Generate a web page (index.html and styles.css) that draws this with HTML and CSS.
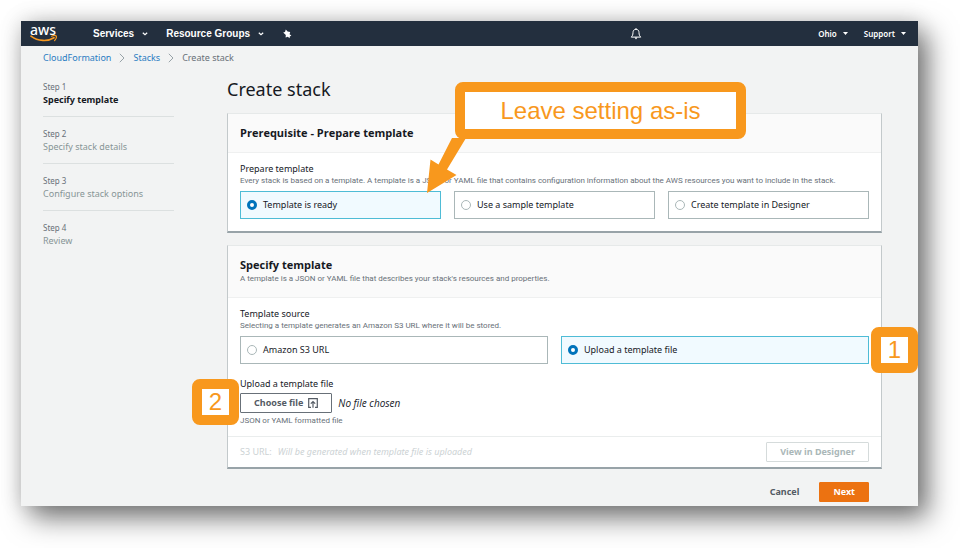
FILE: index.html
```html
<!DOCTYPE html>
<html lang="en">
<head>
<meta charset="utf-8">
<title>Create stack</title>
<link rel="stylesheet" href="styles.css">
</head>
<body>
<div class="window">
  <header class="topbar">
    <a class="logo" href="#" aria-label="AWS">
      <span class="logo-text">aws</span>
      <svg class="logo-smile" viewBox="0 0 28 8" aria-hidden="true"><path d="M1 1.200C8 6.600 18 6.600 24 2.800" fill="none" stroke="#f7981f" stroke-width="1.700" stroke-linecap="round"/><path d="M21.600 1.200c2-.8 4-.8 4.600-.2.5.8-.2 3-1.600 4.600" fill="none" stroke="#f7981f" stroke-width="1.200" stroke-linecap="round"/></svg>
    </a>
    <nav class="menu">
      <button type="button" class="menu-item">Services <svg class="chevron" viewBox="0 0 6 4"><path d="M.8.8 3 2.800 5.200.8"/></svg></button>
      <button type="button" class="menu-item">Resource Groups <svg class="chevron" viewBox="0 0 6 4"><path d="M.8.8 3 2.800 5.200.8"/></svg></button>
      <button type="button" class="menu-item" aria-label="Pin"><svg class="pin" viewBox="0 0 10 10"><path d="M3.800.6 5.600 2.600 8.200 3 7.600 5.200 9.400 6.600 7.800 7.400 7.600 9.200 5.800 7.800 3.600 8.600 3.800 6 1.200 3.600 3 3Z"/></svg></button>
    </nav>
    <button type="button" class="menu-item bell-button" aria-label="Notifications"><svg class="bell" viewBox="0 0 12 12"><path d="M6 1.300c-2 0-3 1.400-3 3.200 0 2.300-.6 3.500-1.800 4.600h9.600C9.600 8 9 6.800 9 4.500 9 2.700 8 1.300 6 1.300Z" fill="none" stroke="#fff"/><path d="M4.600 9.600h2.800L6 11.400ZM5.400.3h1.200v1H5.400Z" fill="#fff"/></svg></button>
    <div class="account">
      <button type="button" class="menu-item small">Ohio <svg class="caret" viewBox="0 0 5 3"><path d="M0 0h5L2.500 3Z"/></svg></button>
      <button type="button" class="menu-item small">Support <svg class="caret" viewBox="0 0 5 3"><path d="M0 0h5L2.500 3Z"/></svg></button>
    </div>
  </header>

  <nav class="breadcrumb" aria-label="Breadcrumb">
    <a href="#">CloudFormation</a>
    <svg class="separator" viewBox="0 0 6 10"><path d="M.8.8 5 5 .8 9.200"/></svg>
    <a href="#">Stacks</a>
    <svg class="separator" viewBox="0 0 6 10"><path d="M.8.8 5 5 .8 9.200"/></svg>
    <span>Create stack</span>
  </nav>

  <div class="layout">
    <ol class="steps">
      <li class="current"><small>Step 1</small><span>Specify template</span></li>
      <li><small>Step 2</small><span>Specify stack details</span></li>
      <li><small>Step 3</small><span>Configure stack options</span></li>
      <li><small>Step 4</small><span>Review</span></li>
    </ol>

    <main class="content">
      <h1>Create stack</h1>

      <section class="panel">
        <div class="panel-header"><h2>Prerequisite - Prepare template</h2></div>
        <div class="panel-body">
          <h3>Prepare template</h3>
          <p class="hint">Every stack is based on a template. A template is a JSON or YAML file that contains configuration information about the AWS resources you want to include in the stack.</p>
          <div class="tiles">
            <label class="tile"><input type="radio" name="prepare" checked>Template is ready</label>
            <label class="tile"><input type="radio" name="prepare">Use a sample template</label>
            <label class="tile"><input type="radio" name="prepare">Create template in Designer</label>
          </div>
        </div>
        <svg class="arrow" viewBox="0 0 46 64" aria-hidden="true"><path d="M30 5 44 5 25 36.500 34.500 42 5 60 8.500 26.500 16.500 31.500Z"/></svg>
        <div class="callout">Leave setting as-is</div>
      </section>

      <section class="panel">
        <div class="panel-header">
          <h2>Specify template</h2>
          <p class="hint">A template is a JSON or YAML file that describes your stack's resources and properties.</p>
        </div>
        <div class="panel-body">
          <h3>Template source</h3>
          <p class="hint">Selecting a template generates an Amazon S3 URL where it will be stored.</p>
          <div class="tiles">
            <label class="tile"><input type="radio" name="source">Amazon S3 URL</label>
            <label class="tile"><input type="radio" name="source" checked>Upload a template file<span class="marker marker-right">1</span></label>
          </div>
          <div class="upload">
            <h3>Upload a template file</h3>
            <div class="file-row">
              <button type="button" class="button">Choose file <svg class="upload-icon" viewBox="0 0 10 10"><path d="M3 9.300H.7V.7h8.600v8.600H7M5 9.800V4M2.800 5.700 5 3.500l2.200 2.200"/></svg></button>
              <em>No file chosen</em>
            </div>
            <p class="hint">JSON or YAML formatted file</p>
            <span class="marker marker-left">2</span>
          </div>
        </div>
        <div class="panel-footer">
          <span>S3 URL:</span>
          <em>Will be generated when template file is uploaded</em>
          <button type="button" class="button" disabled>View in Designer</button>
        </div>
      </section>

      <div class="actions">
        <button type="button" class="button link">Cancel</button>
        <button type="button" class="button primary">Next</button>
      </div>
    </main>
  </div>
</div>
</body>
</html>
```

FILE: styles.css
```css
* {
  box-sizing: border-box;
}

body {
  margin: 0;
  padding: 21px 42px 42px 21px;
  background: #fff;
  color: #16191f;
  font: 9px/12px "Noto Sans", "Open Sans", sans-serif;
}

h1, h2, h3, p, ol {
  margin: 0;
  padding: 0;
}

button {
  font: inherit;
  cursor: pointer;
}

.window {
  background: #f2f3f3;
  box-shadow: 0 0 20px rgba(0, 0, 0, .16), 10px 12px 26px rgba(0, 0, 0, .52);
}

/* Top bar */
.topbar {
  display: flex;
  align-items: center;
  height: 25px;
  padding: 0 12px 0 9px;
  background: #232f3e;
  color: #fff;
}

.logo {
  display: flex;
  flex-direction: column;
  width: 28px;
  margin-right: 35px;
  color: #fff;
  text-decoration: none;
}

.logo-text {
  font-size: 14px;
  font-weight: 500;
  line-height: 11px;
}

.logo-smile {
  width: 28px;
  height: 8px;
}

.menu, .account {
  display: flex;
  align-items: center;
  gap: 18px;
}

.account {
  gap: 16px;
  margin-left: 176px;
}

.menu-item {
  display: flex;
  align-items: center;
  gap: 8px;
  padding: 0;
  border: 0;
  background: none;
  color: #fff;
  font-family: "Liberation Sans", sans-serif;
  font-size: 10px;
  font-weight: 700;
}

.menu-item.small {
  gap: 6px;
  font-family: "Noto Sans", sans-serif;
  font-size: 8px;
  font-weight: 600;
}

.chevron {
  width: 6px;
  height: 4px;
  fill: none;
  stroke: #fff;
  stroke-width: 1.2;
}

.caret {
  width: 5px;
  height: 3px;
  fill: #fff;
}

.pin {
  width: 10px;
  height: 10px;
  fill: #fff;
}

.bell-button {
  margin-left: auto;
}

.bell {
  width: 12px;
  height: 12px;
}

/* Breadcrumb */
.breadcrumb {
  display: flex;
  align-items: center;
  gap: 8px;
  padding: 6px 22px 5px;
  color: #687078;
}

.breadcrumb a {
  color: #2a7cc2;
  text-decoration: none;
}

.separator {
  width: 6px;
  height: 10px;
  fill: none;
  stroke: #98a3a8;
}

/* Page layout */
.layout {
  display: grid;
  grid-template-columns: 131px 1fr;
  gap: 53px;
  padding: 12px 36px 4px 22px;
}

.steps {
  list-style: none;
  color: #879596;
}

.steps li {
  display: flex;
  flex-direction: column;
  gap: 1px;
  padding: 11px 0 10px;
  border-bottom: 1px solid #dce0e0;
}

.steps li:first-child {
  padding-top: 0;
}

.steps li:last-child {
  border: 0;
}

.steps small {
  font-size: 8px;
  color: #687078;
}

.steps .current span {
  color: #16191f;
  font-weight: 700;
}

.content {
  min-width: 0;
}

h1 {
  padding-bottom: 16px;
  font-size: 18px;
  font-weight: 400;
  line-height: 16px;
}

h2 {
  font-family: "Open Sans", sans-serif;
  font-size: 11px;
  font-weight: 700;
  line-height: 14px;
}

h3 {
  font-size: 9px;
  font-weight: 400;
}

.hint {
  color: #687078;
  font-family: Roboto, sans-serif;
  font-size: 8px;
}

/* Panels */
.panel {
  position: relative;
  margin-bottom: 12px;
  border: 1px solid #c3c9cb;
  border-top-color: #e6e9e9;
  border-bottom: 2px solid #98a3a8;
  background: #fff;
}

.panel-header {
  padding: 12px;
  border-bottom: 1px solid #eff0f0;
  background: #fafafa;
}

.panel-header .hint {
  padding-top: 1px;
}

.panel-body {
  padding: 10px 12px 12px;
}

.tiles {
  display: flex;
  gap: 13px;
  padding-top: 4px;
}

.tile {
  position: relative;
  display: flex;
  flex: 1;
  align-items: center;
  gap: 6px;
  height: 28px;
  padding: 0 6px;
  border: 1px solid #aab7b8;
}

.tile:has(:checked) {
  border-color: #4fbcd6;
  background: #f1faff;
}

.tile input {
  width: 10px;
  height: 10px;
  margin: 0;
  border: 1px solid #aab7b8;
  border-radius: 50%;
  background: #fff;
  appearance: none;
}

.tile input:checked {
  border: 3px solid #0073bb;
}

.upload {
  position: relative;
  padding-top: 14px;
  margin-bottom: -3px;
}

.file-row {
  display: flex;
  align-items: center;
  gap: 6px;
  padding: 3px 0 2px;
}

.file-row em {
  font-size: 10px;
  font-family: "Open Sans", sans-serif;
}

.button {
  display: flex;
  align-items: center;
  gap: 5px;
  height: 20px;
  padding: 0 13px;
  border: 1px solid #687078;
  border-radius: 1px;
  background: #fff;
  color: #545b64;
  font-weight: 700;
}

.button:disabled {
  border-color: #d5dbdb;
  color: #aab7b8;
}

.button.primary {
  border-color: #ec7211;
  background: #ec7211;
  color: #fff;
}

.button.link {
  border-color: transparent;
  background: none;
}

.upload-icon {
  width: 10px;
  height: 10px;
  fill: none;
  stroke: #545b64;
  stroke-width: 1.2;
}

.panel-footer {
  display: flex;
  align-items: center;
  gap: 6px;
  padding: 5px 12px;
  border-top: 1px solid #eaeded;
  color: #ccd2d4;
}

.panel-footer .button {
  margin-left: auto;
}

.actions {
  display: flex;
  justify-content: flex-end;
  gap: 6px;
  padding: 1px 13px 0 0;
}

/* Annotations */
.callout, .marker {
  position: absolute;
  border: 10px solid #f8981d;
  border-radius: 8px;
  background: #fff;
  color: #f8981d;
  font-family: "Liberation Sans", sans-serif;
  text-align: center;
}

.callout {
  top: -32px;
  left: 227px;
  width: 291px;
  font-size: 24px;
  line-height: 37px;
}

.marker {
  width: 47px;
  font-size: 24px;
  line-height: 26px;
}

.marker-right {
  top: -10px;
  right: -50px;
}

.marker-left {
  top: 15px;
  left: -48px;
}

.arrow {
  position: absolute;
  top: 19px;
  left: 194px;
  width: 46px;
  height: 64px;
  fill: #f8981d;
}
```
